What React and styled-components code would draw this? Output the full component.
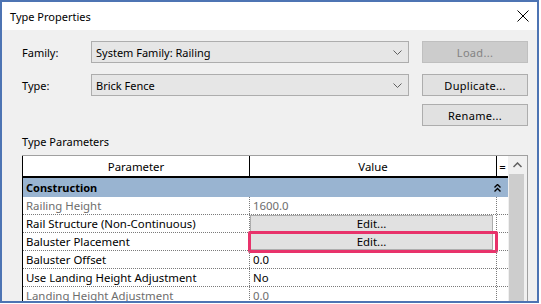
import React from "react";
import styled, { createGlobalStyle } from "styled-components";

const GlobalStyle = createGlobalStyle`
  body {
    margin: 0;
    background: #ffffff;
    font-family: "Noto Sans", "Open Sans", sans-serif;
  }
`;

const Frame = styled.div`
  width: 539px;
  height: 303px;
  box-sizing: border-box;
  border: 2px solid #4d74b3;
  display: flex;
  flex-direction: column;
  overflow: hidden;
  font-size: 11px;
  color: #000;
`;

const TitleBar = styled.div`
  height: 28px;
  flex: none;
  background: #fff;
  display: flex;
  align-items: center;
  justify-content: space-between;
  padding: 0 8px 0 8px;
`;

const Title = styled.span`
  font-size: 11px;
`;

const Body = styled.div`
  flex: 1;
  background: #f0f0f0;
  padding: 11px 7px 0 20px;
  display: flex;
  flex-direction: column;
  min-height: 0;
`;

const Row = styled.div`
  display: grid;
  grid-template-columns: 56px 318px 106px;
  column-gap: 13px;
  height: 22px;
  margin-top: ${p => p.$gap || 0}px;
  align-items: center;
`;

const Label = styled.span`
  padding-left: 0;
`;

const Select = styled.div`
  height: 22px;
  box-sizing: border-box;
  border: 1px solid #adadad;
  background: #e6e6e6;
  display: flex;
  align-items: center;
  justify-content: space-between;
  padding: 0 6px 0 4px;
`;

const Button = styled.div`
  height: 22px;
  box-sizing: border-box;
  border: 1px solid ${p => (p.$disabled ? "#bfbfbf" : "#adadad")};
  background: ${p => (p.$disabled ? "#cccccc" : "#e1e1e1")};
  color: ${p => (p.$disabled ? "#838383" : "#000")};
  display: flex;
  align-items: center;
  justify-content: center;
  letter-spacing: 0.3px;
`;

const Caption = styled.div`
  margin-top: 7px;
  height: 17px;
  line-height: 17px;
`;

const GridControl = styled.div`
  margin-top: 5px;
  width: 506px;
  flex: 1;
  display: flex;
  border-top: 1px solid #a0a0a0;
  border-right: 1px solid #a0a0a0;
  box-sizing: border-box;
  min-height: 0;
`;

const Table = styled.div`
  width: 486px;
  flex: none;
  background: #fff;
  display: flex;
  flex-direction: column;
  border-left: 1px solid #000;
  box-sizing: border-box;
  font-size: 11.4px;
`;

const cols = "227px 247px 1fr";

const Header = styled.div`
  display: grid;
  grid-template-columns: ${cols};
  height: 22px;
  flex: none;
  border-bottom: 2px solid #000;
  box-sizing: border-box;
`;

const HeadCell = styled.div`
  display: flex;
  align-items: center;
  justify-content: center;
  border-right: ${p => (p.$last ? "none" : "1px solid #000")};
`;

const Category = styled.div`
  height: 19px;
  flex: none;
  background: #99b4d1;
  font-weight: bold;
  font-size: 11px;
  display: flex;
  align-items: center;
  justify-content: space-between;
  padding: 0 7px 0 3px;
`;

const DataRow = styled.div`
  display: grid;
  grid-template-columns: ${cols};
  height: 18px;
  flex: none;
  border-bottom: 1px dotted #7a7a7a;
  box-sizing: border-box;
`;

const Cell = styled.div`
  position: relative;
  display: flex;
  align-items: center;
  padding-left: ${p => (p.$pad ? 3 : 0)}px;
  border-right: ${p => (p.$last ? "none" : "1px dotted #7a7a7a")};
  color: ${p => (p.$muted ? "#6d6d6d" : "#000")};
  white-space: nowrap;
  overflow: visible;
`;

const EditButton = styled.div`
  flex: 1;
  align-self: stretch;
  margin-right: 3px;
  background: #e1e1e1;
  border: 1px solid #adadad;
  display: flex;
  align-items: center;
  justify-content: center;
`;

const Highlight = styled.div`
  position: absolute;
  inset: -2px -2px -3px -2px;
  border: 3px solid #e8336b;
  border-radius: 2px;
  pointer-events: none;
`;

const Scrollbar = styled.div`
  width: 19px;
  flex: none;
  background: #f0f0f0;
  display: flex;
  flex-direction: column;
`;

const ScrollArrow = styled.div`
  height: 18px;
  display: flex;
  align-items: center;
  justify-content: center;
`;

const Thumb = styled.div`
  flex: 1;
  margin: 0 3px 0 1px;
  background: #cdcdcd;
`;

const Chevron = () => (
  <svg width="9" height="5" viewBox="0 0 9 5">
    <path d="M0.5 0.5 L4.5 4.5 L8.5 0.5" fill="none" stroke="#606060" strokeWidth="1" />
  </svg>
);

const CloseIcon = () => (
  <svg width="12" height="12" viewBox="0 0 12 12">
    <path d="M0.5 0.5 L11.5 11.5 M11.5 0.5 L0.5 11.5" stroke="#000" strokeWidth="1" />
  </svg>
);

const Collapse = () => (
  <svg width="7" height="8" viewBox="0 0 7 8">
    <path d="M0.5 3.5 L3.5 0.5 L6.5 3.5 M0.5 7.5 L3.5 4.5 L6.5 7.5" fill="none" stroke="#000" strokeWidth="1.4" />
  </svg>
);

const UpArrow = () => (
  <svg width="9" height="6" viewBox="0 0 9 6">
    <path d="M0.5 5 L4.5 1 L8.5 5" fill="none" stroke="#606060" strokeWidth="1.5" />
  </svg>
);

const rows = [
  { name: "Railing Height", value: "1600.0", muted: true },
  { name: "Rail Structure (Non-Continuous)", edit: true },
  { name: "Baluster Placement", edit: true, marked: true },
  { name: "Baluster Offset", value: "0.0" },
  { name: "Use Landing Height Adjustment", value: "No" },
  { name: "Landing Height Adjustment", value: "0.0", muted: true },
];

export default function App() {
  return (
    <>
      <GlobalStyle />
      <Frame>
        <TitleBar>
          <Title>Type Properties</Title>
          <CloseIcon />
        </TitleBar>
        <Body>
          <Row>
            <Label>Family:</Label>
            <Select>
              <span>System Family: Railing</span>
              <Chevron />
            </Select>
            <Button $disabled>Load...</Button>
          </Row>
          <Row $gap={11}>
            <Label>Type:</Label>
            <Select>
              <span>Brick Fence</span>
              <Chevron />
            </Select>
            <Button>Duplicate...</Button>
          </Row>
          <Row $gap={8}>
            <span />
            <span />
            <Button>Rename...</Button>
          </Row>
          <Caption>Type Parameters</Caption>
          <GridControl>
            <Table>
              <Header>
                <HeadCell>Parameter</HeadCell>
                <HeadCell>Value</HeadCell>
                <HeadCell $last>=</HeadCell>
              </Header>
              <Category>
                <span>Construction</span>
                <Collapse />
              </Category>
              {rows.map(r => (
                <DataRow key={r.name}>
                  <Cell $pad $muted={r.muted}>{r.name}</Cell>
                  <Cell $pad={!r.edit} $muted={r.muted}>
                    {r.edit ? <EditButton>Edit...</EditButton> : r.value}
                    {r.marked && <Highlight />}
                  </Cell>
                  <Cell $last />
                </DataRow>
              ))}
            </Table>
            <Scrollbar>
              <ScrollArrow>
                <UpArrow />
              </ScrollArrow>
              <Thumb />
            </Scrollbar>
          </GridControl>
        </Body>
      </Frame>
    </>
  );
}
